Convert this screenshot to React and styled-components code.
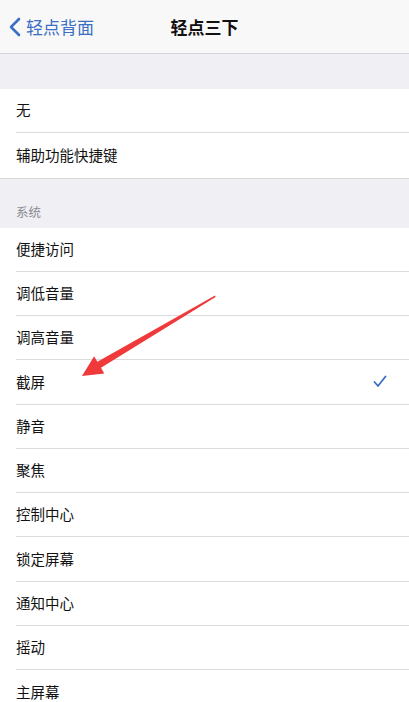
import React from "react";
import styled, { createGlobalStyle } from "styled-components";

const GlobalStyle = createGlobalStyle`
  html, body {
    margin: 0;
    padding: 0;
    background: #efeff4;
    font-family: "Noto Sans CJK SC", "Noto Sans", sans-serif;
  }
`;

const Screen = styled.div`
  position: relative;
  width: 409px;
  height: 702px;
  overflow: hidden;
  background: #efeff4;
`;

const NavBar = styled.div`
  height: 53px;
  display: grid;
  grid-template-columns: 1fr auto 1fr;
  align-items: center;
  background: #f8f8f8;
  border-bottom: 1px solid #d6d6d8;
  box-sizing: content-box;
`;

const Back = styled.div`
  display: flex;
  align-items: center;
  gap: 5px;
  padding-left: 9px;
  color: #3a6fc4;
  font-size: 17px;
  line-height: 1;
`;

const Title = styled.div`
  font-size: 17px;
  font-weight: 600;
  color: #111;
  line-height: 1;
`;

const Gap = styled.div`
  height: ${(p) => p.$h}px;
`;

const SectionHeader = styled.div`
  height: 49px;
  display: flex;
  align-items: flex-end;
  padding: 0 16px 7px;
  box-sizing: border-box;
  font-size: 12.5px;
  color: #8a8a8e;
`;

const Group = styled.div`
  background: #fff;
  border-bottom: ${(p) => (p.$closed ? "1px solid #d6d6d8" : "none")};
`;

const Row = styled.div`
  height: 44.25px;
  display: flex;
  align-items: center;
  justify-content: space-between;
  margin-left: 16px;
  padding-right: 22px;
  box-sizing: border-box;
  font-size: 14.5px;
  color: #111;
  border-bottom: ${(p) => (p.$last ? "none" : "1px solid #dcdcde")};
`;

const Label = styled.span`
  line-height: 1;
`;

const Overlay = styled.svg`
  position: absolute;
  left: 0;
  top: 0;
  pointer-events: none;
`;

const Chevron = () => (
  <svg width="12" height="20" viewBox="0 0 12 20">
    <path d="M10 2 L2 10 L10 18" fill="none" stroke="#3a6fc4" strokeWidth="2.6" strokeLinecap="round" strokeLinejoin="round" />
  </svg>
);

const Check = () => (
  <svg width="14" height="13" viewBox="0 0 14 13">
    <path d="M1.5 7 L5 11 L12.5 1.5" fill="none" stroke="#3a6fc4" strokeWidth="1.8" strokeLinecap="round" strokeLinejoin="round" />
  </svg>
);

const topItems = ["无", "辅助功能快捷键"];
const systemItems = [
  "便捷访问",
  "调低音量",
  "调高音量",
  "截屏",
  "静音",
  "聚焦",
  "控制中心",
  "锁定屏幕",
  "通知中心",
  "摇动",
  "主屏幕",
];
const selected = "截屏";

export default function App() {
  return (
    <Screen>
      <GlobalStyle />
      <NavBar>
        <Back>
          <Chevron />
          <span>轻点背面</span>
        </Back>
        <Title>轻点三下</Title>
        <div />
      </NavBar>
      <Gap $h={35} />
      <Group $closed>
        {topItems.map((t, i) => (
          <Row key={t} $last={i === topItems.length - 1}>
            <Label>{t}</Label>
          </Row>
        ))}
      </Group>
      <SectionHeader>系统</SectionHeader>
      <Group>
        {systemItems.map((t, i) => (
          <Row key={t} $last={i === systemItems.length - 1}>
            <Label>{t}</Label>
            {t === selected && <Check />}
          </Row>
        ))}
      </Group>
      <Overlay width="409" height="702" viewBox="0 0 409 702">
        <polygon
          points="215,295.6 215.6,297 101,367.8 104.3,373.4 82,376 94.1,356.2 97.4,361.8"
          fill="#f0393a"
        />
      </Overlay>
    </Screen>
  );
}
